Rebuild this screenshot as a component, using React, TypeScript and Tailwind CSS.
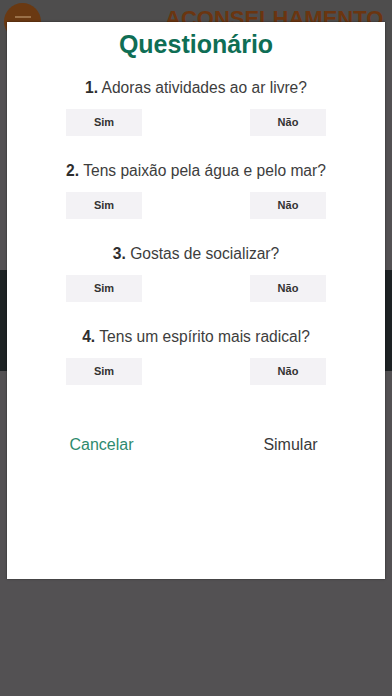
import React from "react";

const questions = [
  "Adoras atividades ao ar livre?",
  "Tens paixão pela água e pelo mar?",
  "Gostas de socializar?",
  "Tens um espírito mais radical?",
];

export default function App() {
  return (
    <div
      className="relative w-[392px] h-[696px] overflow-hidden bg-[#535153]"
      style={{ fontFamily: '"Liberation Sans", Arial, sans-serif' }}
    >
      {/* page behind the overlay */}
      <div className="flex items-start pl-[4px] pt-[3px] bg-[#4e4d4d] h-[60px]">
        <div className="w-[37px] h-[37px] rounded-full bg-[#6a3912] flex justify-center pt-[13px]">
          <div className="w-[16px] h-[2px] bg-[#9a7048]" />
        </div>
        <div className="ml-[124px] mt-[5px] text-[22px] leading-[22px] font-bold text-[#6b3510] whitespace-nowrap">
          ACONSELHAMENTO
        </div>
      </div>
      <div className="mt-[210px] h-[101px] bg-[#1d2224]" />

      {/* dialog */}
      <div className="absolute left-[7px] top-[22px] w-[378px] h-[557px] bg-white shadow-[0_0_2px_rgba(0,0,0,0.5)] flex flex-col items-center pt-[10px]">
        <h1 className="text-[25px] leading-[25px] font-bold text-[#0f6e55]">Questionário</h1>
        <div className="mt-[21px] flex flex-col gap-[25px] w-full items-center">
          {questions.map((q, i) => (
            <div key={i} className="flex flex-col items-center gap-[11px] w-full">
              <p className="text-[15.6px] leading-[20px] text-[#3d3d3d] whitespace-nowrap">
                <span className="font-bold text-[#2e2e2e]">{i + 1}.</span> {q}
              </p>
              <div className="flex justify-between w-[260px]">
                <button className="w-[76px] h-[27px] bg-[#f3f2f5] text-[11px] font-bold text-[#333]">
                  Sim
                </button>
                <button className="w-[76px] h-[27px] bg-[#f3f2f5] text-[11px] font-bold text-[#333]">
                  Não
                </button>
              </div>
            </div>
          ))}
        </div>
        <div className="mt-[50px] grid grid-cols-2 w-full text-[16px] leading-[20px]">
          <span className="text-center text-[#2e8a6e]">Cancelar</span>
          <span className="text-center text-[#3a3a3a]">Simular</span>
        </div>
      </div>
    </div>
  );
}
